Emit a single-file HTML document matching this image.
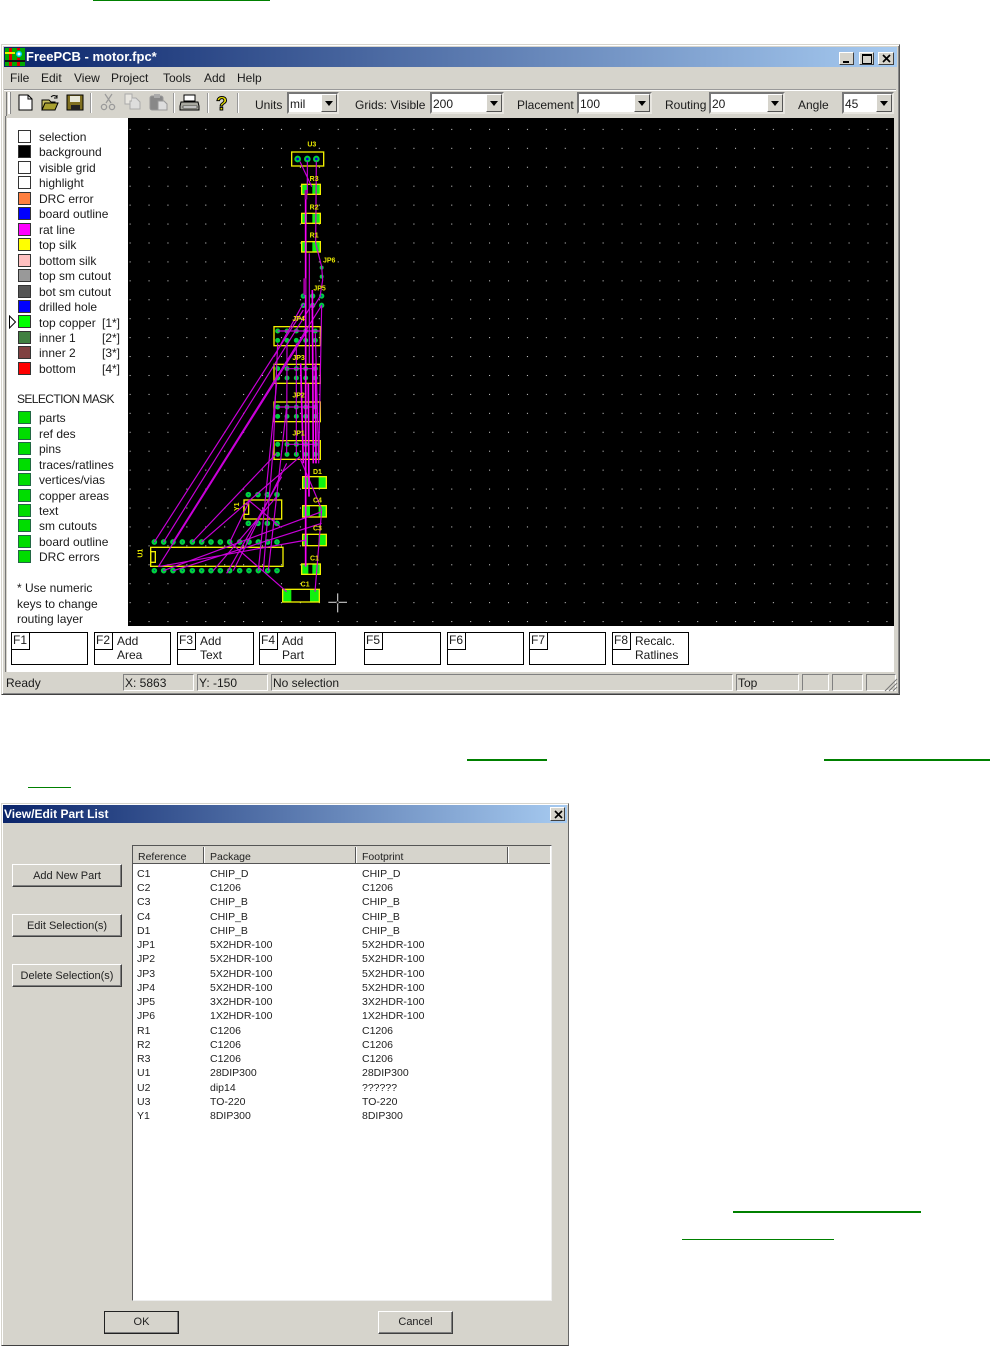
<!DOCTYPE html>
<html><head><meta charset="utf-8"><title>FreePCB</title>
<style>
html,body{margin:0;padding:0;background:#fff}
#p{position:relative;width:990px;height:1346px;overflow:hidden;background:#fff;font:12px/14px "Liberation Sans",sans-serif;color:#1a1a1a}
#p div{position:absolute}
.t{white-space:nowrap;height:14px}
.s{width:11px;height:11px;left:18px;border:1px solid #333}
.m{background:#0d0;border-color:#264}
.fk{width:75px;height:31px;top:632px;background:#fff;border:1px solid #000}
.ft{left:-1px;top:-1px;width:16px;height:16px;border:1px solid #000;line-height:15px;padding-left:1px;background:#fff}
.fx{left:22px;white-space:nowrap}
.sf{top:674px;height:17px;border:1px solid;border-color:#808080 #fff #fff #808080;line-height:17px;padding-left:1px;box-sizing:border-box;white-space:nowrap;overflow:hidden}
.cb{top:92px;height:22px;background:#fff;box-sizing:border-box;border:2px solid;border-color:#777 #e8e6e0 #e8e6e0 #777;line-height:20px;padding-left:1px}
.ar{right:0;top:0;width:16px;height:18px;background:#d6d4cc;box-sizing:border-box;border:1px solid;border-color:#fff #555 #555 #fff}
.ar:after{content:"";position:absolute;left:3px;top:6px;border:4px solid transparent;border-top:5px solid #000;border-bottom:0}
.btn{background:#d6d4cc;box-sizing:border-box;border:1px solid;border-color:#fff #404040 #404040 #fff;box-shadow:inset -1px -1px 0 #808080;text-align:center;font-size:11px;color:#222}
.r{font-size:10.5px;white-space:nowrap;height:14px;color:#222}
.sep{top:93px;width:1px;height:20px;background:#999;border-right:1px solid #fff}
.ul{background:#008000}
.wb{background:#d6d4cc;box-sizing:border-box;border:1px solid;border-color:#fff #404040 #404040 #fff}
</style></head><body><div id="p">

<div class="ul" style="left:93px;top:0;width:177px;height:1px"></div>

<!-- main window -->
<div style="left:1px;top:44px;width:899px;height:651px;background:#d6d4cc;box-sizing:border-box;border:1px solid;border-color:#d6d4cc #555 #404040 #d6d4cc;box-shadow:inset 1px 1px 0 #fff,inset -1px -1px 0 #888"></div>
<div style="left:4px;top:47px;width:893px;height:20px;background:linear-gradient(90deg,#0a246a,#a6caf0)"></div>
<svg style="position:absolute;left:5px;top:48px" width="20" height="18" viewBox="0 0 20 18"><rect width="20" height="18" fill="#0a0"/><rect x="4" y="0" width="3" height="18" fill="#d00"/><rect x="12" y="0" width="3" height="18" fill="#d00"/><rect x="0" y="4" width="10" height="2" fill="#ee0"/><rect y="12" width="20" height="2" fill="#111"/><circle cx="14" cy="6" r="3.5" fill="#0cf" stroke="#0a0"/><circle cx="14" cy="6" r="1.5" fill="#fff"/></svg>
<div class="t" style="left:26px;top:50px;color:#fff;font-weight:bold;font-size:13px">FreePCB - motor.fpc*</div>
<div class="wb" style="left:839px;top:52px;width:15px;height:13px"><div style="left:3px;top:8px;width:6px;height:2px;background:#000"></div></div>
<div class="wb" style="left:859px;top:52px;width:15px;height:13px"><div style="left:2px;top:1px;width:8px;height:7px;border:1px solid #000;border-top-width:2px"></div></div>
<div class="wb" style="left:878px;top:52px;width:16px;height:13px"><svg style="position:absolute;left:3px;top:1px" width="9" height="9"><path d="M1 1L8 8M8 1L1 8" stroke="#000" stroke-width="1.7"/></svg></div>

<div class="t" style="left:10px;top:71px">File</div>
<div class="t" style="left:41px;top:71px">Edit</div>
<div class="t" style="left:74px;top:71px">View</div>
<div class="t" style="left:111px;top:71px">Project</div>
<div class="t" style="left:163px;top:71px">Tools</div>
<div class="t" style="left:204px;top:71px">Add</div>
<div class="t" style="left:237px;top:71px">Help</div>

<!-- toolbar -->
<div style="left:4px;top:89px;width:892px;height:1px;background:#999"></div>
<div style="left:4px;top:90px;width:892px;height:1px;background:#fff"></div>
<div style="left:6px;top:92px;width:1px;height:24px;background:#777"></div>
<div style="left:8px;top:92px;width:2px;height:22px;background:#fff;border-right:1px solid #888"></div>
<svg style="position:absolute;left:14px;top:92px" width="220" height="24" viewBox="0 0 220 24">
<path d="M5 3H14L18 7V18H5Z" fill="#fff" stroke="#000"/><path d="M14 3V7H18" fill="none" stroke="#000"/>
<path d="M28 8H35L37 10H41V18H28Z" fill="#c8c060" stroke="#000"/><path d="M28 18L31 11H44L41 18Z" fill="#a8a030" stroke="#000"/><path d="M37 5Q40 2 43 5M43 3V6H40" fill="none" stroke="#000"/>
<rect x="53" y="3" width="16" height="15" fill="#807020" stroke="#000"/><rect x="56" y="4" width="10" height="6" fill="#e8e8d8"/><rect x="57" y="13" width="9" height="5" fill="#222"/>
<path d="M91 2L97 11M98 2L92 11" stroke="#999" stroke-width="1.2" fill="none"/><circle cx="90" cy="15" r="2.6" fill="none" stroke="#999" stroke-width="1.3"/><circle cx="98" cy="15" r="2.6" fill="none" stroke="#999" stroke-width="1.3"/>
<path d="M111 2H118V12H111Z" fill="#e8e6e0" stroke="#aaa"/><path d="M118 6H122L126 10V17H116V9H118" fill="#ddd" stroke="#aaa"/>
<rect x="136" y="4" width="13" height="14" rx="2" fill="#888" stroke="#999"/><rect x="140" y="2" width="6" height="4" fill="#aaa"/><path d="M144 9H150L153 12V18H144Z" fill="#ddd" stroke="#999"/>
<path d="M170 3H181V9H170Z" fill="#fff" stroke="#000"/><path d="M167 10H184L185 14V18H166V14Z" fill="#a8a8a0" stroke="#000"/><rect x="169" y="14" width="14" height="2" fill="#fff" stroke="#000" stroke-width=".5"/>
<text x="202" y="18" font-family="Liberation Sans" font-weight="bold" font-size="19" fill="#e8e000" stroke="#000" stroke-width="1">?</text>
</svg>
<div class="sep" style="left:90px"></div><div class="sep" style="left:173px"></div><div class="sep" style="left:207px"></div><div class="sep" style="left:237px"></div>

<div class="t" style="left:255px;top:98px">Units</div>
<div class="cb" style="left:287px;width:52px">mil<div class="ar"></div></div>
<div class="t" style="left:355px;top:98px">Grids: Visible</div>
<div class="cb" style="left:430px;width:74px">200<div class="ar"></div></div>
<div class="t" style="left:517px;top:98px">Placement</div>
<div class="cb" style="left:577px;width:75px">100<div class="ar"></div></div>
<div class="t" style="left:665px;top:98px">Routing</div>
<div class="cb" style="left:709px;width:76px">20<div class="ar"></div></div>
<div class="t" style="left:798px;top:98px">Angle</div>
<div class="cb" style="left:842px;width:52px">45<div class="ar"></div></div>

<!-- client -->
<div style="left:5px;top:116px;width:1px;height:556px;background:#777"></div>
<div style="left:7px;top:118px;width:121px;height:508px;background:#fff"></div>
<div style="left:7px;top:626px;width:887px;height:46px;background:#fff"></div>

<!-- legend -->
<div class="s" style="top:130px;background:#fff"></div><div class="t" style="left:39px;top:130px">selection</div>
<div class="s" style="top:145px;background:#000"></div><div class="t" style="left:39px;top:145px">background</div>
<div class="s" style="top:161px;background:#fff"></div><div class="t" style="left:39px;top:161px">visible grid</div>
<div class="s" style="top:176px;background:#fff"></div><div class="t" style="left:39px;top:176px">highlight</div>
<div class="s" style="top:192px;background:#ff8040"></div><div class="t" style="left:39px;top:192px">DRC error</div>
<div class="s" style="top:207px;background:#00f"></div><div class="t" style="left:39px;top:207px">board outline</div>
<div class="s" style="top:223px;background:#f0f"></div><div class="t" style="left:39px;top:223px">rat line</div>
<div class="s" style="top:238px;background:#ff0"></div><div class="t" style="left:39px;top:238px">top silk</div>
<div class="s" style="top:254px;background:#ffc0c0"></div><div class="t" style="left:39px;top:254px">bottom silk</div>
<div class="s" style="top:269px;background:#999"></div><div class="t" style="left:39px;top:269px">top sm cutout</div>
<div class="s" style="top:285px;background:#555"></div><div class="t" style="left:39px;top:285px">bot sm cutout</div>
<div class="s" style="top:300px;background:#00f"></div><div class="t" style="left:39px;top:300px">drilled hole</div>
<div class="s" style="top:315px;background:#0f0"></div><div class="t" style="left:39px;top:316px">top copper</div><div class="t" style="left:102px;top:316px">[1*]</div>
<div class="s" style="top:331px;background:#408040"></div><div class="t" style="left:39px;top:331px">inner 1</div><div class="t" style="left:102px;top:331px">[2*]</div>
<div class="s" style="top:346px;background:#804040"></div><div class="t" style="left:39px;top:346px">inner 2</div><div class="t" style="left:102px;top:346px">[3*]</div>
<div class="s" style="top:362px;background:#f00"></div><div class="t" style="left:39px;top:362px">bottom</div><div class="t" style="left:102px;top:362px">[4*]</div>
<svg style="position:absolute;left:8px;top:315px" width="9" height="14"><path d="M1.5 1L7.5 7L1.5 13Z" fill="#fff" stroke="#000"/></svg>

<div class="t" style="left:17px;top:392px;letter-spacing:-.6px">SELECTION MASK</div>
<div class="s m" style="top:411px"></div><div class="t" style="left:39px;top:411px">parts</div>
<div class="s m" style="top:427px"></div><div class="t" style="left:39px;top:427px">ref des</div>
<div class="s m" style="top:442px"></div><div class="t" style="left:39px;top:442px">pins</div>
<div class="s m" style="top:458px"></div><div class="t" style="left:39px;top:458px">traces/ratlines</div>
<div class="s m" style="top:473px"></div><div class="t" style="left:39px;top:473px">vertices/vias</div>
<div class="s m" style="top:489px"></div><div class="t" style="left:39px;top:489px">copper areas</div>
<div class="s m" style="top:504px"></div><div class="t" style="left:39px;top:504px">text</div>
<div class="s m" style="top:519px"></div><div class="t" style="left:39px;top:519px">sm cutouts</div>
<div class="s m" style="top:535px"></div><div class="t" style="left:39px;top:535px">board outline</div>
<div class="s m" style="top:550px"></div><div class="t" style="left:39px;top:550px">DRC errors</div>
<div class="t" style="left:17px;top:581px">* Use numeric</div>
<div class="t" style="left:17px;top:597px">keys to change</div>
<div class="t" style="left:17px;top:612px">routing layer</div>

<!-- canvas -->
<svg style="position:absolute;left:0;top:0" width="990" height="700" viewBox="0 0 990 700">
<defs><pattern id="g" patternUnits="userSpaceOnUse" x="139.54" y="138.84" width="18.92" height="18.93"><rect x="9" y="9" width="1" height="1" fill="#e0e0e0"/></pattern></defs>
<rect x="128" y="118" width="766" height="508" fill="#000"/>
<rect x="128" y="118" width="766" height="508" fill="url(#g)"/>
<g transform="translate(130 130) scale(.33333)">
<!-- copper -->
<g fill="#10f010">
<rect x="515" y="163" width="16" height="30"/><rect x="547" y="163" width="24" height="30"/>
<rect x="515" y="250" width="16" height="30"/><rect x="547" y="250" width="24" height="30"/>
<rect x="515" y="335" width="16" height="31"/><rect x="547" y="335" width="24" height="31"/>
<rect x="518" y="1040" width="22" height="35"/><rect x="566" y="1040" width="23" height="35"/>
<rect x="518" y="1127" width="22" height="34"/><rect x="566" y="1127" width="23" height="34"/>
<rect x="518" y="1213" width="16" height="34"/><rect x="566" y="1213" width="23" height="34"/>
<rect x="515" y="1302" width="20" height="31"/><rect x="547" y="1302" width="24" height="31"/>
<rect x="458" y="1378" width="26" height="38"/><rect x="540" y="1378" width="28" height="38"/>
</g>
<!-- pads -->
<g fill="#0000e0" stroke="#00d040" stroke-width="6">
<circle cx="503" cy="87" r="7"/><circle cx="532" cy="87" r="7"/><circle cx="559" cy="87" r="7"/>
<circle cx="575" cy="413" r="3"/><circle cx="575" cy="440" r="3"/>
<circle cx="520" cy="498" r="5"/><circle cx="548" cy="498" r="5"/><circle cx="575" cy="498" r="5"/><circle cx="520" cy="526" r="5"/><circle cx="548" cy="526" r="5"/><circle cx="575" cy="526" r="5"/>
</g>
<g fill="#0000a0" stroke="#00d040" stroke-width="7">
<circle cx="443" cy="603" r="4"/><circle cx="471" cy="603" r="4"/><circle cx="499" cy="603" r="4"/><circle cx="527" cy="603" r="4"/><circle cx="556" cy="603" r="4"/>
<circle cx="443" cy="631" r="4"/><circle cx="471" cy="631" r="4"/><circle cx="499" cy="631" r="4"/><circle cx="527" cy="631" r="4"/><circle cx="556" cy="631" r="4"/>
<circle cx="443" cy="716" r="4"/><circle cx="471" cy="716" r="4"/><circle cx="499" cy="716" r="4"/><circle cx="527" cy="716" r="4"/><circle cx="556" cy="716" r="4"/>
<circle cx="443" cy="744" r="4"/><circle cx="471" cy="744" r="4"/><circle cx="499" cy="744" r="4"/><circle cx="527" cy="744" r="4"/><circle cx="556" cy="744" r="4"/>
<circle cx="443" cy="831" r="4"/><circle cx="471" cy="831" r="4"/><circle cx="499" cy="831" r="4"/><circle cx="527" cy="831" r="4"/><circle cx="556" cy="831" r="4"/>
<circle cx="443" cy="859" r="4"/><circle cx="471" cy="859" r="4"/><circle cx="499" cy="859" r="4"/><circle cx="527" cy="859" r="4"/><circle cx="556" cy="859" r="4"/>
<circle cx="443" cy="943" r="4"/><circle cx="471" cy="943" r="4"/><circle cx="499" cy="943" r="4"/><circle cx="527" cy="943" r="4"/><circle cx="556" cy="943" r="4"/>
<circle cx="443" cy="973" r="4"/><circle cx="471" cy="973" r="4"/><circle cx="499" cy="973" r="4"/><circle cx="527" cy="973" r="4"/><circle cx="556" cy="973" r="4"/>
<circle cx="355" cy="1094" r="5"/><circle cx="384" cy="1094" r="5"/><circle cx="412" cy="1094" r="5"/><circle cx="441" cy="1094" r="5"/>
<circle cx="355" cy="1180" r="5"/><circle cx="384" cy="1180" r="5"/><circle cx="412" cy="1180" r="5"/><circle cx="441" cy="1180" r="5"/>
<circle cx="73" cy="1236" r="5"/><circle cx="101" cy="1236" r="5"/><circle cx="129" cy="1236" r="5"/><circle cx="157" cy="1236" r="5"/><circle cx="187" cy="1236" r="5"/><circle cx="215" cy="1236" r="5"/><circle cx="243" cy="1236" r="5"/><circle cx="271" cy="1236" r="5"/><circle cx="299" cy="1236" r="5"/><circle cx="329" cy="1236" r="5"/><circle cx="357" cy="1236" r="5"/><circle cx="385" cy="1236" r="5"/><circle cx="413" cy="1236" r="5"/><circle cx="441" cy="1236" r="5"/>
<circle cx="73" cy="1322" r="5"/><circle cx="101" cy="1322" r="5"/><circle cx="129" cy="1322" r="5"/><circle cx="157" cy="1322" r="5"/><circle cx="187" cy="1322" r="5"/><circle cx="215" cy="1322" r="5"/><circle cx="243" cy="1322" r="5"/><circle cx="271" cy="1322" r="5"/><circle cx="299" cy="1322" r="5"/><circle cx="329" cy="1322" r="5"/><circle cx="357" cy="1322" r="5"/><circle cx="385" cy="1322" r="5"/><circle cx="413" cy="1322" r="5"/><circle cx="441" cy="1322" r="5"/>
</g>
<!-- silk -->
<g fill="none" stroke="#f0f000" stroke-width="4">
<rect x="485" y="66" width="96" height="42"/>
<rect x="515" y="163" width="56" height="30"/><rect x="515" y="250" width="56" height="30"/><rect x="515" y="335" width="56" height="31"/>
<rect x="432" y="590" width="139" height="57"/><rect x="432" y="703" width="139" height="57"/><rect x="432" y="816" width="139" height="59"/><rect x="432" y="932" width="139" height="56"/>
<rect x="518" y="1040" width="71" height="35"/><rect x="518" y="1127" width="71" height="34"/><rect x="518" y="1213" width="71" height="34"/><rect x="515" y="1302" width="56" height="31"/>
<rect x="458" y="1378" width="110" height="38"/>
<rect x="342" y="1110" width="113" height="57"/><rect x="342" y="1122" width="14" height="31"/>
<rect x="62" y="1252" width="397" height="57"/><rect x="62" y="1265" width="14" height="32"/>
</g>
<!-- rat lines -->
<g fill="none" stroke="#c800d8" stroke-width="3.5">
<path d="M510 95L545 170M532 95V190M559 95L557 340L575 410L578 450L570 500L545 540"/>
<path d="M73 1236L520 540M101 1236L548 520M129 1236L575 526M85 1310L533 600"/>
<path d="M187 1236L440 970M215 1236L510 980M100 1322L575 1145M130 1322L575 1180M85 1310L530 1230"/>
<path d="M290 1330L455 1040M250 1322L440 1100M310 1322L470 1000M385 1322L440 760M415 1322L470 830"/>
<path d="M299 1236L470 1385M510 985Q560 1100 575 1140L555 1385M355 1110L450 1190M360 1110L300 1235"/>
<path d="M443 603H570M471 716H556M443 831H556M471 943L556 943"/>
<path d="M443 640L430 950L400 1322M471 640L470 970M499 640L499 975M556 610L566 990M575 526L566 1000M538 370V700M520 520L432 680"/>
</g>
<g fill="none" stroke="#f800f8" stroke-width="5">
<path d="M527 190V1310M547 480L550 1000M535 760L537 1100M512 700L520 1000M556 700L558 1000"/>
</g>
<rect x="524" y="180" width="8" height="28" fill="#a000a0"/>
<rect x="520" y="445" width="9" height="50" fill="#a000a0"/>
<!-- labels -->
<g font-family="Liberation Sans" font-size="21" font-weight="bold" fill="#e8e800">
<text x="532" y="49">U3</text><text x="539" y="153">R3</text><text x="539" y="239">R2</text><text x="539" y="323">R1</text>
<text x="579" y="397">JP6</text><text x="550" y="481">JP5</text><text x="487" y="573">JP4</text><text x="487" y="690">JP3</text><text x="487" y="803">JP2</text><text x="487" y="916">JP1</text>
<text x="549" y="1032">D1</text><text x="549" y="1117">C4</text><text x="549" y="1201">C3</text><text x="540" y="1292">C1</text><text x="512" y="1369">C1</text>
<text transform="translate(327 1143) rotate(-90)">Y1</text><text transform="translate(38 1283) rotate(-90)">U1</text>
</g>
<!-- cursor -->
<path d="M595 1417H651M623 1390V1447" stroke="#c8c8c8" stroke-width="3.5" fill="none"/>
<circle cx="623" cy="1417" r="4" fill="#000" stroke="#bbb"/>
</g>
</svg>

<!-- function keys -->
<div class="fk" style="left:11px"><div class="ft">F1</div></div>
<div class="fk" style="left:94px"><div class="ft">F2</div><div class="fx" style="top:1px">Add<br>Area</div></div>
<div class="fk" style="left:177px"><div class="ft">F3</div><div class="fx" style="top:1px">Add<br>Text</div></div>
<div class="fk" style="left:259px"><div class="ft">F4</div><div class="fx" style="top:1px">Add<br>Part</div></div>
<div class="fk" style="left:364px"><div class="ft">F5</div></div>
<div class="fk" style="left:447px"><div class="ft">F6</div></div>
<div class="fk" style="left:529px"><div class="ft">F7</div></div>
<div class="fk" style="left:612px"><div class="ft">F8</div><div class="fx" style="top:1px">Recalc.<br>Ratlines</div></div>

<!-- status -->
<div class="t" style="left:6px;top:676px">Ready</div>
<div class="sf" style="left:123px;width:71px">X: 5863</div>
<div class="sf" style="left:197px;width:71px">Y: -150</div>
<div class="sf" style="left:271px;width:462px">No selection</div>
<div class="sf" style="left:736px;width:63px">Top</div>
<div class="sf" style="left:802px;width:27px"></div>
<div class="sf" style="left:832px;width:31px"></div>
<div class="sf" style="left:866px;width:30px"></div>
<svg style="position:absolute;left:884px;top:678px" width="14" height="14"><path d="M13 1L1 13M13 5L5 13M13 9L9 13" stroke="#777" fill="none"/></svg>

<div class="ul" style="left:467px;top:759px;width:80px;height:2px"></div>
<div class="ul" style="left:824px;top:759px;width:166px;height:2px"></div>
<div class="ul" style="left:28px;top:787px;width:43px;height:1px"></div>

<!-- dialog -->
<div style="left:1px;top:803px;width:568px;height:543px;background:#d6d4cc;box-sizing:border-box;border:1px solid;border-color:#d6d4cc #666 #404040 #d6d4cc;box-shadow:inset 1px 1px 0 #fff"></div>
<div style="left:3px;top:805px;width:564px;height:18px;background:linear-gradient(90deg,#0a246a,#a6caf0)"></div>
<div class="t" style="left:4px;top:807px;color:#fff;font-weight:bold;font-size:12px">View/Edit Part List</div>
<div class="wb" style="left:550px;top:807px;width:15px;height:14px"><svg style="position:absolute;left:3px;top:2px" width="9" height="9"><path d="M1 1L8 8M8 1L1 8" stroke="#000" stroke-width="1.6"/></svg></div>

<div class="btn" style="left:12px;top:864px;width:110px;height:23px;line-height:23px">Add New Part</div>
<div class="btn" style="left:12px;top:914px;width:110px;height:23px;line-height:23px">Edit Selection(s)</div>
<div class="btn" style="left:12px;top:964px;width:110px;height:23px;line-height:23px">Delete Selection(s)</div>

<div style="left:132px;top:845px;width:420px;height:456px;background:#fff;box-sizing:border-box;border:1px solid;border-color:#555 #eee #eee #555"></div>
<div style="left:133px;top:846px;width:417px;height:17px;background:#d6d4cc;border-bottom:1px solid #555"></div>
<div style="left:203px;top:847px;width:1px;height:16px;background:#555;border-right:1px solid #fff"></div>
<div style="left:355px;top:847px;width:1px;height:16px;background:#555;border-right:1px solid #fff"></div>
<div style="left:507px;top:847px;width:1px;height:16px;background:#555;border-right:1px solid #fff"></div>
<div class="r" style="left:138px;top:850px">Reference</div><div class="r" style="left:210px;top:850px">Package</div><div class="r" style="left:362px;top:850px">Footprint</div>

<div class="r" style="left:137px;top:867px">C1</div><div class="r" style="left:210px;top:867px">CHIP_D</div><div class="r" style="left:362px;top:867px">CHIP_D</div>
<div class="r" style="left:137px;top:881px">C2</div><div class="r" style="left:210px;top:881px">C1206</div><div class="r" style="left:362px;top:881px">C1206</div>
<div class="r" style="left:137px;top:895px">C3</div><div class="r" style="left:210px;top:895px">CHIP_B</div><div class="r" style="left:362px;top:895px">CHIP_B</div>
<div class="r" style="left:137px;top:910px">C4</div><div class="r" style="left:210px;top:910px">CHIP_B</div><div class="r" style="left:362px;top:910px">CHIP_B</div>
<div class="r" style="left:137px;top:924px">D1</div><div class="r" style="left:210px;top:924px">CHIP_B</div><div class="r" style="left:362px;top:924px">CHIP_B</div>
<div class="r" style="left:137px;top:938px">JP1</div><div class="r" style="left:210px;top:938px">5X2HDR-100</div><div class="r" style="left:362px;top:938px">5X2HDR-100</div>
<div class="r" style="left:137px;top:952px">JP2</div><div class="r" style="left:210px;top:952px">5X2HDR-100</div><div class="r" style="left:362px;top:952px">5X2HDR-100</div>
<div class="r" style="left:137px;top:967px">JP3</div><div class="r" style="left:210px;top:967px">5X2HDR-100</div><div class="r" style="left:362px;top:967px">5X2HDR-100</div>
<div class="r" style="left:137px;top:981px">JP4</div><div class="r" style="left:210px;top:981px">5X2HDR-100</div><div class="r" style="left:362px;top:981px">5X2HDR-100</div>
<div class="r" style="left:137px;top:995px">JP5</div><div class="r" style="left:210px;top:995px">3X2HDR-100</div><div class="r" style="left:362px;top:995px">3X2HDR-100</div>
<div class="r" style="left:137px;top:1009px">JP6</div><div class="r" style="left:210px;top:1009px">1X2HDR-100</div><div class="r" style="left:362px;top:1009px">1X2HDR-100</div>
<div class="r" style="left:137px;top:1024px">R1</div><div class="r" style="left:210px;top:1024px">C1206</div><div class="r" style="left:362px;top:1024px">C1206</div>
<div class="r" style="left:137px;top:1038px">R2</div><div class="r" style="left:210px;top:1038px">C1206</div><div class="r" style="left:362px;top:1038px">C1206</div>
<div class="r" style="left:137px;top:1052px">R3</div><div class="r" style="left:210px;top:1052px">C1206</div><div class="r" style="left:362px;top:1052px">C1206</div>
<div class="r" style="left:137px;top:1066px">U1</div><div class="r" style="left:210px;top:1066px">28DIP300</div><div class="r" style="left:362px;top:1066px">28DIP300</div>
<div class="r" style="left:137px;top:1081px">U2</div><div class="r" style="left:210px;top:1081px">dip14</div><div class="r" style="left:362px;top:1081px">??????</div>
<div class="r" style="left:137px;top:1095px">U3</div><div class="r" style="left:210px;top:1095px">TO-220</div><div class="r" style="left:362px;top:1095px">TO-220</div>
<div class="r" style="left:137px;top:1109px">Y1</div><div class="r" style="left:210px;top:1109px">8DIP300</div><div class="r" style="left:362px;top:1109px">8DIP300</div>

<div class="btn" style="left:104px;top:1311px;width:75px;height:23px;line-height:20px;outline:1px solid #222;outline-offset:-1px;border-color:#222">OK</div>
<div class="btn" style="left:378px;top:1311px;width:75px;height:23px;line-height:20px">Cancel</div>

<div class="ul" style="left:733px;top:1211px;width:188px;height:2px"></div>
<div class="ul" style="left:682px;top:1239px;width:152px;height:1px"></div>
</div></body></html>
